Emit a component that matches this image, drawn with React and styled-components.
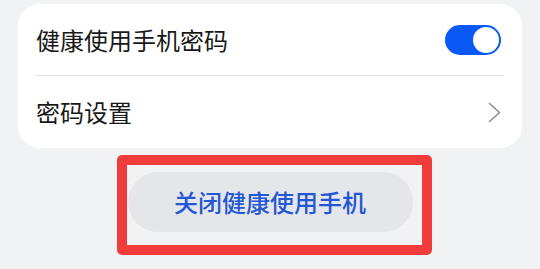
import React, { useState } from "react";
import styled, { createGlobalStyle } from "styled-components";

const Global = createGlobalStyle`
  html, body { margin: 0; padding: 0; background: #f1f2f4; }
  body { font-family: "Noto Sans CJK SC", "Noto Sans", sans-serif; }
  * { box-sizing: border-box; }
`;

const Page = styled.div`
  position: relative;
  width: 540px;
  height: 269px;
  padding: 4px 18px 0;
  display: flex;
  flex-direction: column;
  align-items: center;
  overflow: hidden;
`;

const Card = styled.div`
  width: 100%;
  background: #ffffff;
  border-radius: 22px;
  padding: 0 18px;
  display: flex;
  flex-direction: column;
`;

const Row = styled.div`
  height: ${(p) => p.$h}px;
  display: flex;
  align-items: center;
  justify-content: space-between;
  padding-right: 3px;
  border-bottom: ${(p) => (p.$divider ? "1px solid #e3e4e6" : "none")};
`;

const Label = styled.span`
  font-size: 24px;
  color: #191919;
  letter-spacing: 0;
  line-height: 1;
`;

const Track = styled.button`
  width: 56px;
  height: 30px;
  border: none;
  border-radius: 15px;
  padding: 2px;
  background: ${(p) => (p.$on ? "#0a59f7" : "#c9cacc")};
  display: flex;
  justify-content: ${(p) => (p.$on ? "flex-end" : "flex-start")};
  align-items: center;
  cursor: pointer;
`;

const Knob = styled.span`
  width: 26px;
  height: 26px;
  border-radius: 50%;
  background: #ffffff;
`;

const Chevron = styled.svg`
  width: 13px;
  height: 21px;
  display: block;
`;

const ActionButton = styled.button`
  margin-top: 24px;
  width: 285px;
  height: 60px;
  border: none;
  border-radius: 30px;
  background: #e5e6e9;
  color: #2357d4;
  font-family: "Noto Sans CJK SC", "Noto Sans", sans-serif;
  font-size: 24px;
  font-weight: 500;
  line-height: 1;
  display: flex;
  align-items: center;
  justify-content: center;
`;

const Highlight = styled.div`
  position: absolute;
  left: 117px;
  top: 155px;
  width: 315px;
  height: 100px;
  border: 10px solid #f23b3b;
  border-radius: 5px;
  pointer-events: none;
`;

export default function App() {
  const [on, setOn] = useState(true);
  return (
    <>
      <Global />
      <Page>
        <Card>
          <Row $h={72} $divider>
            <Label>健康使用手机密码</Label>
            <Track $on={on} onClick={() => setOn(!on)}>
              <Knob />
            </Track>
          </Row>
          <Row $h={72}>
            <Label>密码设置</Label>
            <Chevron viewBox="0 0 13 21">
              <path d="M1.5 1.5 L11.5 10.5 L1.5 19.5" fill="none" stroke="#8e8e8e" strokeWidth="1.6" strokeLinecap="round" strokeLinejoin="round" />
            </Chevron>
          </Row>
        </Card>
        <ActionButton>关闭健康使用手机</ActionButton>
        <Highlight />
      </Page>
    </>
  );
}
